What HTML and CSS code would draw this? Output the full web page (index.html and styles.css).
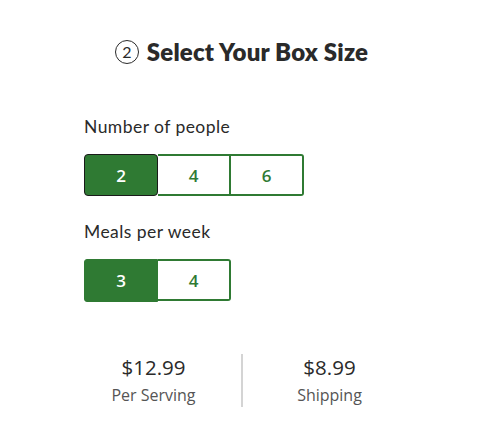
FILE: index.html
```html
<!DOCTYPE html>
<html lang="en">
<head>
<meta charset="utf-8">
<link rel="stylesheet" href="styles.css">
</head>
<body>
<main class="page">
  <h2 class="title"><span class="step">2</span>Select Your Box Size</h2>
  <section class="options">
    <div class="label">Number of people</div>
    <div class="group">
      <button class="opt selected">2</button>
      <button class="opt">4</button>
      <button class="opt">6</button>
    </div>
    <div class="label">Meals per week</div>
    <div class="group">
      <button class="opt selected plain">3</button>
      <button class="opt">4</button>
    </div>
  </section>
  <section class="stats">
    <div class="stat">
      <div class="price">$12.99</div>
      <div class="caption">Per Serving</div>
    </div>
    <div class="divider"></div>
    <div class="stat">
      <div class="price">$8.99</div>
      <div class="caption">Shipping</div>
    </div>
  </section>
</main>
</body>
</html>
```
FILE: styles.css
```css
* { box-sizing: border-box; }
html, body { margin: 0; background: #fff; }
body { font-family: "Open Sans", "Liberation Sans", sans-serif; color: #242424; }
.page { width: 483px; height: 435px; padding-top: 37px; }
.title {
  margin: 0;
  display: flex; align-items: center; justify-content: center;
  font-family: "Lato", "Liberation Sans", sans-serif;
  font-weight: 800; font-size: 24px; line-height: 30px; letter-spacing: 0.2px;
  color: #2a2a2a;
}
.step {
  width: 24px; height: 24px; border: 1.7px solid #2a2a2a; border-radius: 50%;
  display: inline-flex; align-items: center; justify-content: center;
  font-family: "Lato", sans-serif; font-weight: 400; font-size: 16px; line-height: 1;
  margin-right: 8px; letter-spacing: 0;
}
.options { padding: 0 0 0 84px; margin-top: 50px; }
.label {
  font-family: "Lato", "Liberation Sans", sans-serif; font-size: 17.5px; line-height: 20px;
  letter-spacing: 0.45px;
  color: #2a2a2a; margin-bottom: 17px;
}
.group { display: flex; margin-bottom: 26px; }
.opt {
  width: 73px; height: 42px; margin: 0; padding: 0;
  background: #fff; border: 2px solid #2f7a33; border-left-width: 0;
  font-family: "Open Sans", sans-serif; font-weight: 600; font-size: 17px; color: #2f7a33;
}
.opt:first-child { border-left-width: 2px; border-radius: 3px 0 0 3px; }
.opt:last-child { border-radius: 0 3px 3px 0; }
.opt.selected { background: #2f7a33; color: #fff; border: 1.5px solid #1a1a1a; border-radius: 4px; width: 74px; }
.opt.selected.plain { border-color: #2f7a33; border-radius: 3px 0 0 3px; height: 43px; }
.options .group:last-child { margin-bottom: 0; }
.stats {
  display: flex; justify-content: center; align-items: stretch;
  margin-top: 52px;
}
.stat { width: 174px; text-align: center; }
.price { font-size: 20.5px; line-height: 26px; font-weight: 500; color: #2a2a2a; }
.caption { font-size: 16px; line-height: 22px; color: #555; margin-top: 4px; }
.divider { width: 2px; background: #d4d4d4; height: 53px; }
```
